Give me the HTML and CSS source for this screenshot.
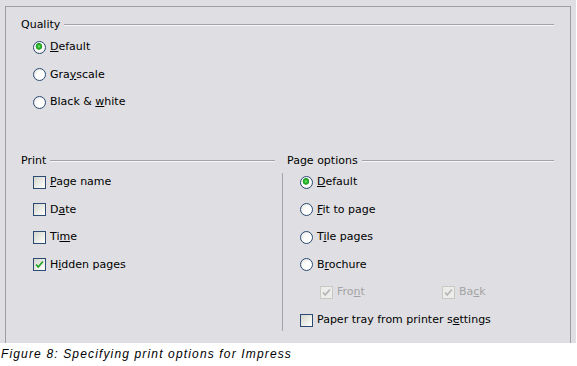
FILE: index.html
```html
<!DOCTYPE html>
<html>
<head>
    <link rel="stylesheet" href="styles.css">
</head>
<body>
    <div class="dialog">
        <div class="frame">
            <div class="quality">
                <div class="group-title"><span>Quality</span><span class="rule"></span></div>
                <div class="options">
                    <label class="option"><span class="radio checked"></span><span><u>D</u>efault</span></label>
                    <label class="option"><span class="radio"></span><span>Gra<u>y</u>scale</span></label>
                    <label class="option"><span class="radio"></span><span>Black &amp; <u>w</u>hite</span></label>
                </div>
            </div>

            <div class="columns">
                <div class="col-print">
                    <div class="group-title"><span>Print</span><span class="rule"></span></div>
                    <div class="options print-options">
                        <label class="option"><span class="check"></span><span><u>P</u>age name</span></label>
                        <label class="option"><span class="check"></span><span>D<u>a</u>te</span></label>
                        <label class="option"><span class="check"></span><span>Ti<u>m</u>e</span></label>
                        <label class="option"><span class="check checked"><svg viewBox="0 0 13 13"><path d="M2.5 6.5 L5 9.5 L10.5 3" /></svg></span><span>H<u>i</u>dden pages</span></label>
                    </div>
                </div>
                <div class="col-page">
                    <div class="group-title"><span>Page options</span><span class="rule"></span></div>
                    <div class="options page-options">
                        <label class="option"><span class="radio checked"></span><span><u>D</u>efault</span></label>
                        <label class="option"><span class="radio"></span><span><u>F</u>it to page</span></label>
                        <label class="option"><span class="radio"></span><span>T<u>i</u>le pages</span></label>
                        <label class="option"><span class="radio"></span><span>B<u>r</u>ochure</span></label>
                        <div class="sub-row">
                            <label class="option disabled front"><span class="check checked"><svg viewBox="0 0 13 13"><path d="M2.5 6.5 L5 9.5 L10.5 3" /></svg></span><span>Fro<u>n</u>t</span></label>
                            <label class="option disabled"><span class="check checked"><svg viewBox="0 0 13 13"><path d="M2.5 6.5 L5 9.5 L10.5 3" /></svg></span><span>Ba<u>c</u>k</span></label>
                        </div>
                        <label class="option last"><span class="check"></span><span>Paper tray from printer s<u>e</u>ttings</span></label>
                    </div>
                </div>
            </div>
        </div>
    </div>
    <p class="caption">Figure 8: Specifying print options for Impress</p>
</body>
</html>
```

FILE: styles.css
```css
body {
    margin: 0;
    background-color: #fff;
    font-family: "DejaVu Sans", sans-serif;
    font-size: 11px;
    color: #000;
}
.dialog {
    width: 576px;
    height: 343px;
    box-sizing: border-box;
    padding: 6px 0 0 5px;
    background-color: #dfdfe3;
}
.frame {
    width: 566px;
    height: 337px;
    box-sizing: border-box;
    border: 1px solid #9d9da3;
    border-bottom: none;
}
.group-title {
    display: flex;
    align-items: center;
    height: 14px;
    line-height: 14px;
}
.rule {
    flex: 1;
    margin-left: 4px;
    margin-top: -1px;
    border-top: 1px solid #a2a2aa;
    border-bottom: 1px solid #f6f6f8;
}
.quality {
    padding: 11px 16px 0 15px;
}
.options {
    display: flex;
    flex-direction: column;
    gap: 13.5px;
}
.quality .options {
    padding: 8px 0 0 12px;
}
.option {
    display: flex;
    align-items: center;
    gap: 4px;
    height: 14px;
    line-height: 14px;
    white-space: nowrap;
}
.option u {
    text-decoration-thickness: 1px;
    text-underline-offset: 1px;
}
.radio {
    width: 13px;
    height: 13px;
    box-sizing: border-box;
    border-radius: 50%;
    border: 1px solid #2b4b73;
    background: radial-gradient(circle at 65% 65%, #ffffff 0, #ffffff 40%, #dcdcd6 100%);
}
.radio.checked {
    background: radial-gradient(circle at 45% 40%, #8ee58e 0, #2dbb2d 1.5px, #1e9a1e 3px, #ffffff 3.6px, #ffffff 45%, #dcdcd6 100%);
}
.check {
    width: 13px;
    height: 13px;
    box-sizing: border-box;
    border: 1px solid #2b4b73;
    background: linear-gradient(135deg, #d6d6d0 0%, #f2f2ee 70%, #ffffff 100%);
}
.check svg {
    display: block;
    width: 11px;
    height: 11px;
    margin: 0;
}
.check path {
    fill: none;
    stroke: #21a121;
    stroke-width: 2;
}
.columns {
    display: grid;
    grid-template-columns: 270px 1fr;
    margin-top: 45px;
}
.col-print {
    padding: 0 1px 0 15px;
}
.print-options {
    padding: 7px 0 0 12px;
}
.col-page {
    padding: 0 16px 0 11px;
}
.page-options {
    margin: 5px 0 0 -5px;
    padding: 2px 0 4px 17px;
    border-left: 1px solid #a2a2aa;
}
.sub-row {
    display: flex;
    padding-left: 20px;
    height: 14px;
}
.sub-row .front {
    width: 122px;
}
.option.last {
    margin-top: 0.5px;
}
.disabled {
    color: #a3a3a3;
}
.disabled .check {
    border-color: #c9c9c4;
    background: #ececea;
}
.disabled .check path {
    stroke: #b4b4b4;
}
.caption {
    margin: 4px 0 0 1px;
    font-family: "Liberation Sans", Arial, sans-serif;
    font-size: 12px;
    font-style: italic;
    line-height: 14px;
    letter-spacing: 1.15px;
}
```
